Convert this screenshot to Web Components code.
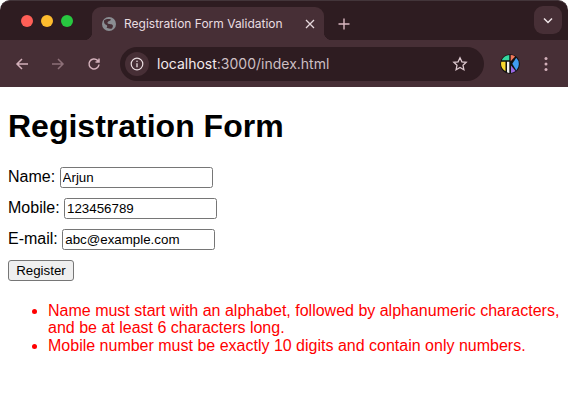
<!DOCTYPE html>
<html>
<head>
<meta charset="utf-8">
<title>Registration Form Validation</title>
<style>
    html, body { margin: 0; padding: 0; background: #fff; }
    body { font-family: "Liberation Sans", Arial, sans-serif; width: 568px; height: 417px; overflow: hidden; }
</style>
</head>
<body>
<browser-chrome tab-title="Registration Form Validation" address-host="localhost" address-rest=":3000/index.html"></browser-chrome>
<registration-page></registration-page>

<script>
const chromeTemplate = document.createElement("template");
chromeTemplate.innerHTML = `
    <style>
        :host { display: block; height: 87px; background: #2e1c21; font-family: "Inter", "Liberation Sans", sans-serif; overflow: hidden; border-top: 1px solid #43353a; border-radius: 10px 10px 0 0; box-sizing: border-box; }
        .tabs { height: 39px; display: flex; align-items: flex-end; padding-right: 6px; }
        .lights { width: 92px; height: 100%; flex: none; display: flex; align-items: center; gap: 8px; padding: 0 0 0 21px; box-sizing: border-box; }
        .lights i { width: 12px; height: 12px; border-radius: 50%; }
        .tab { width: 232px; height: 33px; flex: none; background: #472f36; border-radius: 9px 9px 0 0; display: flex; align-items: center; padding: 0 9px; box-sizing: border-box; color: #e9dde0; font-size: 12px; position: relative; }
        .tab::before, .tab::after { content: ""; position: absolute; bottom: 0; width: 8px; height: 8px; }
        .tab::before { left: -8px; background: radial-gradient(circle at 0 0, transparent 8px, #472f36 8.5px); }
        .tab::after { right: -8px; background: radial-gradient(circle at 100% 0, transparent 8px, #472f36 8.5px); }
        .tab .title { margin-left: 7px; flex: 1; white-space: nowrap; }
        .new { margin-left: 8px; width: 24px; height: 33px; display: flex; align-items: center; justify-content: center; }
        .spacer { flex: 1; }
        .more { width: 28px; height: 28px; border-radius: 9px; background: #472f36; display: flex; align-items: center; justify-content: center; margin-bottom: 6px; }
        .bar { height: 47px; background: #472f36; display: flex; align-items: center; padding-left: 14px; }
        .nav { width: 16px; height: 16px; flex: none; display: block; }
        .omni { margin-left: 18px; width: 364px; height: 34px; flex: none; border-radius: 17px; background: #2e1c21; display: flex; align-items: center; padding: 0 5px; box-sizing: border-box; font-size: 14px; color: #cdbfc3; }
        .info { width: 24px; height: 24px; border-radius: 50%; background: #472f36; display: flex; align-items: center; justify-content: center; flex: none; }
        .url { margin-left: 8px; flex: 1; white-space: nowrap; }
        .url b { font-weight: 400; color: #f3eaec; }
        .ext { margin-left: 16px; width: 20px; height: 20px; flex: none; }
    </style>
    <div class="tabs">
        <div class="lights"><i style="background:#ff5f57"></i><i style="background:#febc2e"></i><i style="background:#28c840"></i></div>
        <div class="tab">
            <svg width="16" height="16" viewBox="0 0 16 16"><circle cx="8" cy="8" r="7" fill="#8a8d92"/><path d="M3 4.500C5 3 8 2.800 10 3.500 9.500 5 7 5 6.500 6.500 6 8 9.500 8 11 8.500 12.500 9 12 11 11 12.500 9 13 6.500 12.500 5.500 11.500 7 10.500 6 9 4.500 8.500 3.500 8 2.800 6.500 3 4.500z" fill="#472f36"/></svg>
            <span class="title" id="title"></span>
            <svg width="10" height="10" viewBox="0 0 10 10"><path d="M1 1l8 8M9 1l-8 8" stroke="#e6d8dc" stroke-width="1.300" fill="none"/></svg>
        </div>
        <div class="new"><svg width="12" height="12" viewBox="0 0 12 12"><path d="M6 .5v11M.5 6h11" stroke="#dcb8c2" stroke-width="1.400" fill="none"/></svg></div>
        <div class="spacer"></div>
        <div class="more"><svg width="10" height="7" viewBox="0 0 10 7"><path d="M1 1.500l4 4 4-4" stroke="#f0e4e7" stroke-width="1.500" fill="none"/></svg></div>
    </div>
    <div class="bar">
        <svg class="nav" viewBox="0 0 16 16"><path d="M14 8H3M8 3L3 8l5 5" stroke="#d3b0ba" stroke-width="1.500" fill="none"/></svg>
        <svg class="nav" style="margin-left:20px;opacity:.5" viewBox="0 0 16 16"><path d="M2 8h11M8 3l5 5-5 5" stroke="#d3b0ba" stroke-width="1.500" fill="none"/></svg>
        <svg class="nav" style="margin-left:20px" viewBox="0 0 16 16"><path d="M13 8.500A5 5 0 1 1 11.500 4.400L13 6M13 2.500V6H9.500" stroke="#d3b0ba" stroke-width="1.500" fill="none"/></svg>
        <div class="omni">
            <div class="info"><svg width="14" height="14" viewBox="0 0 14 14"><circle cx="7" cy="7" r="5.800" stroke="#e9dde0" stroke-width="1.200" fill="none"/><path d="M7 6.200v4" stroke="#e9dde0" stroke-width="1.300"/><circle cx="7" cy="4.300" r=".8" fill="#e9dde0"/></svg></div>
            <span class="url"><b id="host"></b><span id="rest"></span></span>
            <svg style="margin-right:11px" width="16" height="16" viewBox="0 0 16 16"><path d="M8 1.800l1.900 4 4.300.5-3.200 3 .9 4.400L8 11.500l-3.900 2.200.9-4.400-3.200-3 4.300-.5z" stroke="#dcc8ce" stroke-width="1.300" fill="none"/></svg>
        </div>
        <svg class="ext" viewBox="0 0 20 20">
            <circle cx="10" cy="10" r="9.800" fill="#111"/>
            <path d="M9.300 1.100A9 9 0 0 0 1.800 6.300h7.500z" fill="#35d7a0"/>
            <path d="M10.700 1.100v6.200l4.400-4.900a9 9 0 0 0-4.400-1.300z" fill="#f2785c"/>
            <path d="M12.300 9.800l4-6a9 9 0 0 1 0 12.600z" fill="#3f9df2"/>
            <path d="M11 11.500l4.600 5.400a9 9 0 0 1-4.600 2z" fill="#9a67e0"/>
            <path d="M1.300 7.700H5.500V17.300a9 9 0 0 1-4.200-9.600z" fill="#f7d82f"/>
            <path d="M7 7.700h2.300V19a9 9 0 0 1-2.300-.7z" fill="#f3f3f3"/>
        </svg>
        <svg style="margin-left:24px" width="4" height="16" viewBox="0 0 4 16"><circle cx="2" cy="2.500" r="1.500" fill="#d3b0ba"/><circle cx="2" cy="8" r="1.500" fill="#d3b0ba"/><circle cx="2" cy="13.500" r="1.500" fill="#d3b0ba"/></svg>
    </div>
`;

class BrowserChrome extends HTMLElement {
    connectedCallback() {
        const shadowRoot = this.attachShadow({ mode: "open" });
        shadowRoot.appendChild(chromeTemplate.content.cloneNode(true));
        shadowRoot.getElementById("title").textContent = this.getAttribute("tab-title");
        shadowRoot.getElementById("host").textContent = this.getAttribute("address-host");
        shadowRoot.getElementById("rest").textContent = this.getAttribute("address-rest");
    }
}
customElements.define("browser-chrome", BrowserChrome);

const pageTemplate = document.createElement("template");
pageTemplate.innerHTML = `
    <style>
        :host { display: block; padding: 0 8px; font-family: "Liberation Sans", Arial, sans-serif; font-size: 16px; color: #000; }
        h1 { font-size: 32px; line-height: 37px; margin: 21px 0 21px; font-weight: 700; }
        .row { height: 22px; margin-bottom: 9px; display: flex; align-items: center; gap: 4.450px; white-space: nowrap; }
        .row.last { margin-bottom: 10px; }
        input { font: 13.333px "Liberation Sans", Arial, sans-serif; width: 153px; height: 21px; box-sizing: border-box; padding: 1px 2px; border: 1px solid #767676; border-radius: 2.500px; color: #000; background: #fff; margin: 0; }
        button { font: 13.333px "Liberation Sans", Arial, sans-serif; height: 21px; width: 66px; padding: 0; border: 1px solid #767676; border-radius: 3px; background: #efefef; color: #000; margin: 0; display: block; }
        ul { margin: 20.600px 0 0; padding-left: 40px; color: #f00; line-height: 17.500px; }
    </style>
    <h1>Registration Form</h1>
    <div class="row"><label>Name:</label><input value="Arjun"></div>
    <div class="row"><label>Mobile:</label><input value="123456789"></div>
    <div class="row last"><label>E-mail:</label><input value="abc@example.com"></div>
    <button>Register</button>
    <ul>
        <li>Name must start with an alphabet, followed by alphanumeric characters, and be at least 6 characters long.</li>
        <li>Mobile number must be exactly 10 digits and contain only numbers.</li>
    </ul>
`;

class RegistrationPage extends HTMLElement {
    connectedCallback() {
        const shadowRoot = this.attachShadow({ mode: "open" });
        shadowRoot.appendChild(pageTemplate.content.cloneNode(true));
    }
}
customElements.define("registration-page", RegistrationPage);
</script>
</body>
</html>
